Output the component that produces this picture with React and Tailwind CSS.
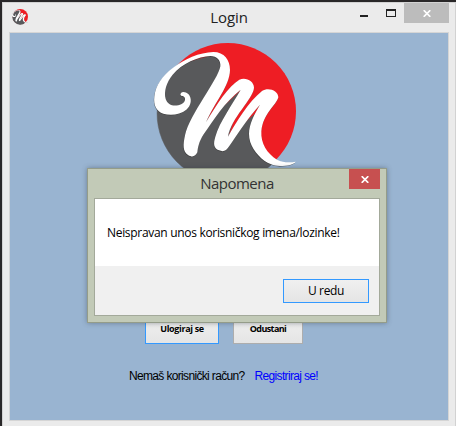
function LogoMark({ className }) {
  return (
    <svg className={className} viewBox="0 0 480 450" aria-hidden="true">
      <circle cx="248" cy="229" r="205" fill="#ee1d24" />
      <path
        d="M98 89A205 205 0 0 0 386 383L330 310L350 220L250 305L295 160L183 262L250 100L215 58Z"
        fill="#58595b"
        stroke="#58595b"
        strokeWidth="1.5"
      />
      <path
        d="M108 174C112 169 122 170 130 177C142 190 139 212 124 224C106 239 77 243 55 236C34 229 25 210 28 185C32 151 51 124 82 100C117 72 164 52 205 51C238 51 255 75 255 105C254 153 211 199 183 262C215 207 251 153 283 134C302 125 327 138 327 158C325 191 258 249 249 305C273 262 311 200 351 168C370 155 400 167 400 187C394 211 354 235 349 289C347 325 366 356 396 374C413 382 431 383 452 380C448 388 427 393 405 393C384 391 371 386 358 377C333 358 312 330 312 297C312 267 329 236 345 209C309 248 281 292 253 333C243 349 235 351 222 346C205 339 205 325 211 305C223 261 262 209 287 164C242 198 203 258 176 298C161 321 159 338 157 352C151 365 142 368 129 360C113 350 114 329 120 301C134 238 219 135 226 94C228 77 216 63 196 63C160 65 111 85 83 119C64 142 56 170 62 192C69 213 91 216 110 207C124 199 124 183 108 182Q104 179 108 174Z"
        fill="#333"
        transform="translate(-1 2)"
        opacity=".65"
      />
      <path
        d="M108 174C112 169 122 170 130 177C142 190 139 212 124 224C106 239 77 243 55 236C34 229 25 210 28 185C32 151 51 124 82 100C117 72 164 52 205 51C238 51 255 75 255 105C254 153 211 199 183 262C215 207 251 153 283 134C302 125 327 138 327 158C325 191 258 249 249 305C273 262 311 200 351 168C370 155 400 167 400 187C394 211 354 235 349 289C347 325 366 356 396 374C413 382 431 383 452 380C448 388 427 393 405 393C384 391 371 386 358 377C333 358 312 330 312 297C312 267 329 236 345 209C309 248 281 292 253 333C243 349 235 351 222 346C205 339 205 325 211 305C223 261 262 209 287 164C242 198 203 258 176 298C161 321 159 338 157 352C151 365 142 368 129 360C113 350 114 329 120 301C134 238 219 135 226 94C228 77 216 63 196 63C160 65 111 85 83 119C64 142 56 170 62 192C69 213 91 216 110 207C124 199 124 183 108 182Q104 179 108 174Z"
        fill="#fff"
      />
    </svg>
  );
}

function CloseGlyph() {
  return (
    <svg className="h-[7px] w-2" viewBox="0 0 8 7" aria-hidden="true">
      <path d="M.7.2L7.3 6.8M7.3.2L.7 6.8" stroke="#fff" strokeWidth="1.7" />
    </svg>
  );
}

function TitleBar() {
  return (
    <header className="grid h-[29px] shrink-0 grid-cols-[1fr_auto_1fr] items-start">
      <LogoMark className="mt-[5px] ml-[8px] h-[17px] w-[18px]" />
      <h1 className="mt-[3px] text-[15px] leading-[22px] tracking-[-0.1px] text-[#222]">Login</h1>
      <div className="flex justify-end">
        <span className="mt-[12px] mr-[18px] h-[2px] w-2 bg-[#222]" />
        <span className="mt-[6px] mr-2 h-2 w-[10px] border border-t-2 border-[#222]" />
        <button className="mr-[6px] flex h-5 w-[45px] items-center justify-center bg-[#bcbcbc]" aria-label="Zatvori">
          <CloseGlyph />
        </button>
      </div>
    </header>
  );
}

function MessageDialog() {
  return (
    <section
      role="dialog"
      className="absolute top-[168px] left-[87px] flex h-[155px] w-[300px] flex-col border border-[#949c89] bg-[#c2cab7] px-[6px] pb-[6px] shadow-[0_0_5px_rgba(50,60,70,0.45)]"
    >
      <div className="grid h-[29px] shrink-0 grid-cols-[1fr_auto_1fr] items-start">
        <span />
        <h2 className="mt-[3px] text-[15px] leading-[22px] tracking-[-0.5px] text-[#333]">Napomena</h2>
        <button className="flex h-5 w-[31px] items-center justify-center justify-self-end bg-[#c75050]" aria-label="Zatvori poruku">
          <CloseGlyph />
        </button>
      </div>
      <div className="flex flex-1 flex-col border border-[#a3a99a] bg-white">
        <p className="h-[67px] pt-[25px] pl-3 text-[12px] leading-[18px] tracking-[-0.31px] whitespace-nowrap text-black">
          Neispravan unos korisničkog imena/lozinke!
        </p>
        <div className="flex flex-1 justify-end bg-[#f0f0f0] pt-[13px] pr-[10px]">
          <button className="h-6 w-[86px] border border-[#3399ff] bg-linear-to-b from-[#f0f0f0] to-[#e5e5e5] text-[12px] leading-[22px] tracking-[-0.35px]">
            U redu
          </button>
        </div>
      </div>
    </section>
  );
}

export default function App() {
  return (
    <div className="relative h-[426px] w-[456px] overflow-hidden bg-[#292728] pt-[2px] pl-[2px] font-['Open_Sans',sans-serif]">
      <main className="flex h-[424px] flex-col border-t border-r border-l border-[#d2d2d2] bg-[#ebebeb]">
        <TitleBar />
        <div className="mr-[6px] ml-[6px] flex h-[389px] flex-col border border-[#d5d5d5] bg-[#99b4d1]">
          <LogoMark className="mt-[2px] ml-[135px] h-[150px] w-[160px] shrink-0" />
          <div className="mt-[130px] flex gap-[14px] pl-[135px] text-[9px] font-bold tracking-[-0.35px] text-black">
            <button className="h-[29px] w-[74px] border border-[#3399ff] bg-linear-to-b from-[#f0f0f0] to-[#e5e5e5] pb-[2px]">
              Ulogiraj se
            </button>
            <button className="h-[29px] w-[70px] border border-[#adadad] bg-linear-to-b from-[#f0f0f0] to-[#e5e5e5] pb-[2px] tracking-[-0.6px]">
              Odustani
            </button>
          </div>
          <div className="mt-[24px] flex gap-[10px] pl-[119px] font-['Liberation_Sans',sans-serif] text-[12px] leading-4 tracking-[-0.66px] whitespace-nowrap">
            <span>Nemaš korisnički račun?</span>
            <a className="text-[#0000ff]">Registriraj se!</a>
          </div>
        </div>
      </main>
      <MessageDialog />
    </div>
  );
}
